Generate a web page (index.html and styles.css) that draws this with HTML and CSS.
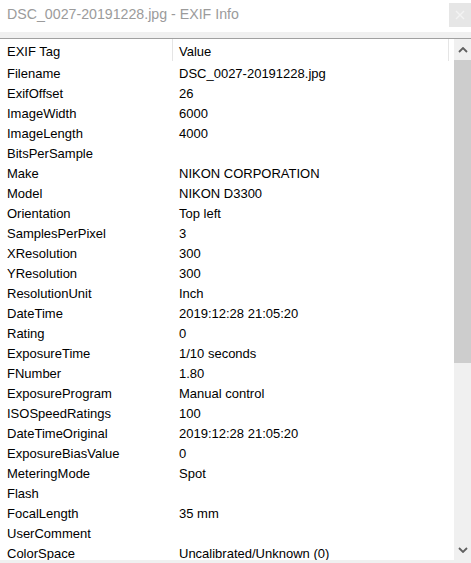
FILE: index.html
```html
<!DOCTYPE html>
<html>
<head>
<meta charset="utf-8">
<title>EXIF Info</title>
<link rel="stylesheet" href="styles.css">
</head>
<body>
<div class="window">
  <div class="titlebar">
    <span class="title">DSC_0027-20191228.jpg - EXIF Info</span>
    <button class="close" aria-label="Close">
      <svg width="10" height="10" viewBox="0 0 10 10"><path d="M1 1L9 9M9 1L1 9" stroke="#f3f3f3" stroke-width="1.3" fill="none"/></svg>
    </button>
  </div>
  <div class="band"></div>
  <div class="listview">
    <div class="table">
      <div class="head">
        <div class="hcell tag">EXIF Tag</div>
        <div class="hcell value">Value</div>
      </div>
      <div class="rows">
        <div class="row"><span class="tag">Filename</span><span class="value">DSC_0027-20191228.jpg</span></div>
        <div class="row"><span class="tag">ExifOffset</span><span class="value">26</span></div>
        <div class="row"><span class="tag">ImageWidth</span><span class="value">6000</span></div>
        <div class="row"><span class="tag">ImageLength</span><span class="value">4000</span></div>
        <div class="row"><span class="tag">BitsPerSample</span><span class="value"></span></div>
        <div class="row"><span class="tag">Make</span><span class="value">NIKON CORPORATION</span></div>
        <div class="row"><span class="tag">Model</span><span class="value">NIKON D3300</span></div>
        <div class="row"><span class="tag">Orientation</span><span class="value">Top left</span></div>
        <div class="row"><span class="tag">SamplesPerPixel</span><span class="value">3</span></div>
        <div class="row"><span class="tag">XResolution</span><span class="value">300</span></div>
        <div class="row"><span class="tag">YResolution</span><span class="value">300</span></div>
        <div class="row"><span class="tag">ResolutionUnit</span><span class="value">Inch</span></div>
        <div class="row"><span class="tag">DateTime</span><span class="value">2019:12:28 21:05:20</span></div>
        <div class="row"><span class="tag">Rating</span><span class="value">0</span></div>
        <div class="row"><span class="tag">ExposureTime</span><span class="value">1/10 seconds</span></div>
        <div class="row"><span class="tag">FNumber</span><span class="value">1.80</span></div>
        <div class="row"><span class="tag">ExposureProgram</span><span class="value">Manual control</span></div>
        <div class="row"><span class="tag">ISOSpeedRatings</span><span class="value">100</span></div>
        <div class="row"><span class="tag">DateTimeOriginal</span><span class="value">2019:12:28 21:05:20</span></div>
        <div class="row"><span class="tag">ExposureBiasValue</span><span class="value">0</span></div>
        <div class="row"><span class="tag">MeteringMode</span><span class="value">Spot</span></div>
        <div class="row"><span class="tag">Flash</span><span class="value"></span></div>
        <div class="row"><span class="tag">FocalLength</span><span class="value">35 mm</span></div>
        <div class="row"><span class="tag">UserComment</span><span class="value"></span></div>
        <div class="row"><span class="tag">ColorSpace</span><span class="value">Uncalibrated/Unknown (0)</span></div>
      </div>
    </div>
    <div class="scrollbar">
      <div class="arrow">
        <svg width="10" height="6" viewBox="0 0 10 6"><path d="M1 5L5 1L9 5" stroke="#606060" stroke-width="1.8" fill="none"/></svg>
      </div>
      <div class="track">
        <div class="thumb"></div>
      </div>
      <div class="arrow">
        <svg width="10" height="6" viewBox="0 0 10 6"><path d="M1 1L5 5L9 1" stroke="#606060" stroke-width="1.8" fill="none"/></svg>
      </div>
    </div>
  </div>
  <div class="footer"></div>
</div>
</body>
</html>
```

FILE: styles.css
```css
html, body {
  margin: 0;
  padding: 0;
  background: #ffffff;
}

.window {
  width: 471px;
  height: 563px;
  display: flex;
  flex-direction: column;
  font-family: "Liberation Sans", Arial, sans-serif;
  overflow: hidden;
}

.titlebar {
  height: 32px;
  display: flex;
  align-items: flex-start;
  justify-content: space-between;
  flex: none;
}

.title {
  padding-left: 7px;
  line-height: 29px;
  font-size: 14.2px;
  color: #9b9b9b;
}

.close {
  margin-top: 3px;
  width: 22px;
  height: 24px;
  border: none;
  padding: 0;
  background: #e6e6e6;
  display: flex;
  align-items: center;
  justify-content: center;
}

.band {
  height: 6px;
  background: #f0f0f0;
  border-bottom: 1px solid #a0a0a0;
  flex: none;
}

.listview {
  flex: 1;
  display: flex;
  min-height: 0;
}

.table {
  width: 454px;
  display: flex;
  flex-direction: column;
  overflow: hidden;
}

.head {
  height: 24px;
  display: flex;
  flex: none;
  font-size: 13px;
  color: #000;
}

.hcell {
  line-height: 25px;
  height: 22px;
}

.hcell.tag {
  width: 165px;
  padding-left: 7px;
  border-right: 1px solid #e5e5e5;
}

.hcell.value {
  width: 269px;
  padding-left: 6px;
  border-right: 1px solid #e5e5e5;
}

.rows {
  padding-top: 1px;
  font-size: 13px;
  color: #000;
}

.row {
  height: 20px;
  line-height: 20px;
  display: flex;
  white-space: nowrap;
}

.row .tag {
  width: 166px;
  padding-left: 7px;
}

.row .value {
  padding-left: 6px;
}

.scrollbar {
  width: 17px;
  background: #f0f0f0;
  display: flex;
  flex-direction: column;
}

.arrow {
  height: 21px;
  display: flex;
  align-items: center;
  justify-content: center;
  flex: none;
}

.track {
  flex: 1;
  display: flex;
  flex-direction: column;
}

.thumb {
  height: 303px;
  background: #cdcdcd;
}

.footer {
  height: 3px;
  background: #f0f0f0;
  flex: none;
}
```
